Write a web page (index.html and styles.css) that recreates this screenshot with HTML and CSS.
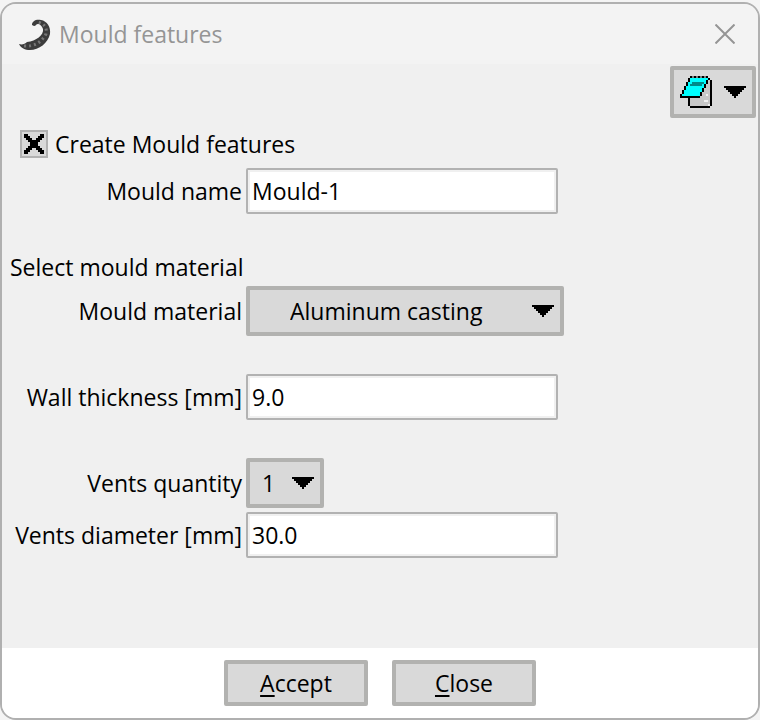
FILE: index.html
```html
<!DOCTYPE html>
<html lang="en">
<head>
<meta charset="utf-8">
<title>Mould features</title>
<link rel="stylesheet" href="styles.css">
</head>
<body>
<main class="window">
  <header class="titlebar">
    <svg class="logo" viewBox="0 0 34 34" aria-hidden="true">
      <path class="logo-body" d="M14 8C14 4 18 2 23 3C29 4 33 10 32 17C30 26 21 33 12 33C7 33 3 31 1 27C4 28 7 27 9 25C18 24 26 18 25 12C24 9 22 7 20 7C18 7 18 9 16 9Z"/>
      <path class="logo-spots" d="M6 29Q21 30 28 17Q30 8 20 5"/>
    </svg>
    <h1 class="title">Mould features</h1>
    <button class="close" type="button" aria-label="Close window">
      <svg viewBox="0 0 20 20"><path d="M0.500 0.500L19.500 19.500M19.500 0.500L0.500 19.500"/></svg>
    </button>
  </header>
  <form class="content" id="mould">
    <div class="toolbar">
      <button class="raised tool" type="button" aria-label="Notes">
        <svg class="note" viewBox="0 0 16 16" shape-rendering="crispEdges" aria-hidden="true">
          <path fill="#c8c8c8" d="M5 2H15V15H5Z"/>
          <path fill="#00ffff" d="M5 1H14V2H13V4H12V6H11V8H10V10H1V7H2V5H3V3H4V1Z"/>
          <path fill="#008b8b" d="M6 3H12V4H11V5H5V4H6Z"/>
          <path d="M5 0H14V1H5ZM4 1H5V3H4ZM3 3H4V5H3ZM2 5H3V7H2ZM1 7H2V9H1ZM0 9H1V11H0ZM1 10H10V11H1ZM14 1H15V2H14ZM13 2H14V4H13ZM12 4H13V6H12ZM11 6H12V8H11ZM10 8H11V10H10ZM15 2H16V15H15ZM4 11H5V15H4ZM5 15H15V16H5Z"/>
          <path fill="#808080" d="M6 0H7V1H6ZM8 0H9V1H8ZM10 0H11V1H10ZM12 0H13V1H12Z"/>
          <path fill="#f0f0f0" d="M13 9H14V10H13ZM12 12H14V13H12ZM14 14H15V15H14Z"/>
        </svg>
        <svg class="arrow" viewBox="0 0 22 12" shape-rendering="crispEdges" aria-hidden="true"><path d="M0 0H22V2H20V4H18V6H16V8H14V10H12V12H10V10H8V8H6V6H4V4H2V2H0Z"/></svg>
      </button>
    </div>
    <label class="check-row">
      <span class="check">
        <input type="checkbox" checked>
        <svg viewBox="0 0 10 10" shape-rendering="crispEdges" aria-hidden="true"><path d="M0 0H2V1H3V2H4V3H6V2H7V1H8V0H10V2H9V3H8V4H7V6H8V7H9V8H10V10H8V9H7V8H6V7H4V8H3V9H2V10H0V8H1V7H2V6H3V4H2V3H1V2H0Z"/></svg>
      </span>
      Create Mould features
    </label>
    <div class="row">
      <label for="name">Mould name</label>
      <input class="field" id="name" type="text" value="Mould-1">
    </div>
    <div class="group">
      <div class="row heading"><span class="caption">Select mould material</span></div>
      <div class="row">
        <label for="material">Mould material</label>
        <span class="dropdown">
          <select class="raised material" id="material"><option>Aluminum casting</option></select>
          <svg class="arrow" viewBox="0 0 22 12" shape-rendering="crispEdges" aria-hidden="true"><path d="M0 0H22V2H20V4H18V6H16V8H14V10H12V12H10V10H8V8H6V6H4V4H2V2H0Z"/></svg>
        </span>
      </div>
    </div>
    <div class="group">
      <div class="row">
        <label for="wall">Wall thickness [mm]</label>
        <input class="field" id="wall" type="text" value="9.0">
      </div>
    </div>
    <div class="group">
      <div class="row">
        <label for="vents">Vents quantity</label>
        <span class="dropdown">
          <select class="raised quantity" id="vents"><option>1</option></select>
          <svg class="arrow" viewBox="0 0 22 12" shape-rendering="crispEdges" aria-hidden="true"><path d="M0 0H22V2H20V4H18V6H16V8H14V10H12V12H10V10H8V8H6V6H4V4H2V2H0Z"/></svg>
        </span>
      </div>
      <div class="row">
        <label for="diameter">Vents diameter [mm]</label>
        <input class="field" id="diameter" type="text" value="30.0">
      </div>
    </div>
  </form>
  <footer class="actions">
    <button class="raised action" type="submit" form="mould"><span class="key">A</span>ccept</button>
    <button class="raised action" type="button"><span class="key">C</span>lose</button>
  </footer>
</main>
</body>
</html>
```
FILE: styles.css
```css
* { box-sizing: border-box; }
body {
  margin: 0;
  padding-top: 2px;
  background: #f4f4f4;
  color: #000;
  font: 23px/28px "Open Sans", "Noto Sans", sans-serif;
}
button, input, select { font: inherit; color: inherit; }
.window {
  display: flex;
  flex-direction: column;
  min-height: calc(100vh - 2px);
  border: 2px solid #b0b0b0;
  border-radius: 16px;
  background: #f0f0f0;
  overflow: hidden;
}
.titlebar {
  display: flex;
  align-items: center;
  height: 60px;
  padding: 0 23px 0 16px;
  background: #f3f3f3;
  color: #959595;
}
.logo { width: 34px; height: 34px; }
.logo-body { fill: #3c3c3c; }
.logo-spots { fill: none; stroke: #777; stroke-width: 3; stroke-dasharray: 2 3; }
.title { flex: 1; margin: 0 0 0 7px; font-size: 23px; font-weight: 400; }
.close { display: flex; padding: 0; border: 0; background: none; }
.close svg { width: 20px; height: 20px; fill: none; stroke: #959595; stroke-width: 2; }
.content { flex: 1; padding: 2px 2px 24px 8px; }
.toolbar { display: flex; justify-content: flex-end; margin-bottom: 12px; }
.raised {
  border: 4px solid #b2b2b0;
  border-radius: 2px;
  background: #d9d9d9;
  appearance: none;
}
.tool { display: flex; align-items: center; justify-content: space-between; width: 86px; height: 52px; padding: 0 6px; }
.note { width: 32px; height: 32px; }
.arrow { width: 22px; height: 12px; fill: #000; }
.check-row { display: flex; align-items: center; gap: 7px; width: fit-content; margin: 0 0 10px 10px; }
.check { display: grid; place-items: center; }
.check input, .check svg { grid-area: 1 / 1; }
.check input { width: 28px; height: 28px; margin: 0; border: 2px solid #b2b2b2; background: #d9d9d9; appearance: none; }
.check svg { position: relative; width: 20px; height: 20px; pointer-events: none; visibility: hidden; }
.check input:checked + svg { visibility: visible; }
.row { display: grid; grid-template-columns: 232px 1fr; align-items: center; gap: 4px; }
.row + .row { margin-top: 4px; }
.row label, .caption { text-align: right; white-space: nowrap; }
.heading { height: 30px; }
.group { margin-top: 38px; }
.field {
  width: 312px;
  max-width: 100%;
  height: 46px;
  padding: 0 4px;
  border: 2px solid #b2b2b2;
  border-radius: 2px;
  background: #fff;
  box-shadow: inset 0 0 0 2px #f0f0f0;
}
.dropdown { display: grid; align-items: center; justify-self: start; }
.dropdown select, .dropdown .arrow { grid-area: 1 / 1; }
.dropdown .arrow { justify-self: end; margin-right: 10px; pointer-events: none; }
.dropdown select { height: 50px; line-height: 36px; }
.material { width: 318px; padding: 0 40px; }
.quantity { width: 78px; padding: 0 12px; }
.actions { display: flex; justify-content: center; gap: 24px; padding: 12px; background: #fff; }
.action { width: 144px; height: 46px; padding: 0; }
.key { text-decoration: underline; text-decoration-thickness: 2px; text-underline-offset: 3px; text-decoration-skip-ink: none; }
```
